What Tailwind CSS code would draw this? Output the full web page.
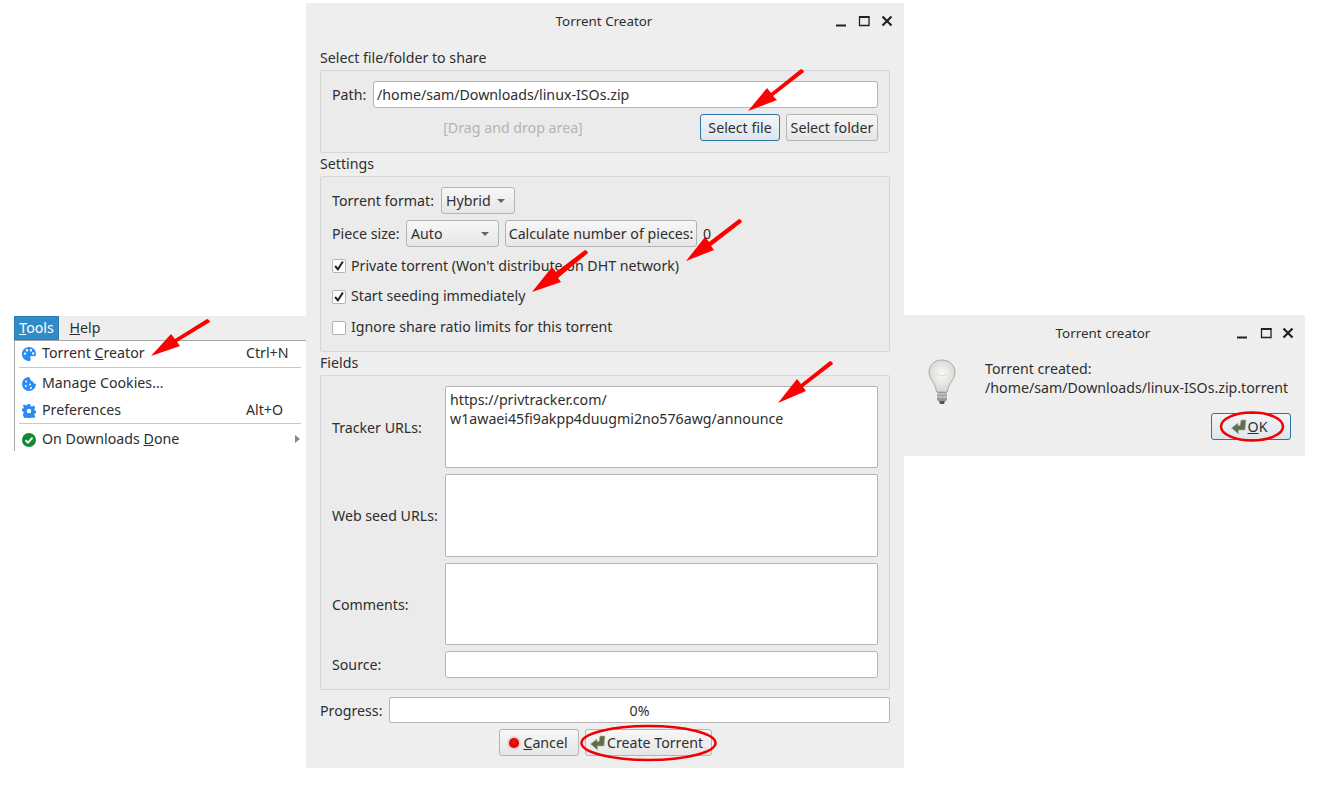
<!DOCTYPE html>
<html>
<head>
<meta charset="utf-8">
<script src="https://cdn.jsdelivr.net/npm/@tailwindcss/browser@4"></script>
<title>Torrent Creator</title>
</head>
<body class="bg-white">
<div class="relative w-[1324px] h-[800px] overflow-hidden bg-white font-['Noto_Sans',sans-serif] text-[14.2px] leading-[19px] text-[#2e2e2e]">

  <!-- Tools menu -->
  <div class="absolute left-[14px] top-[316px] w-[292px] h-[134px] flex flex-col">
    <div class="h-[24px] bg-[#eeeeee] flex shrink-0">
      <div class="w-[45px] bg-[#308cc6] text-white border border-[#2a7bb0] flex items-center justify-center"><span class="mb-[2px]"><u>T</u>ools</span></div>
      <div class="w-[52px] flex items-center justify-center"><span class="mb-[2px]"><u>H</u>elp</span></div>
    </div>
    <div class="flex-1 bg-white border-l border-t border-[#a9a9a9] flex flex-col">
      <div class="h-[26px] flex items-center pl-[7px] pr-[15px]">
        <svg class="w-[14px] h-[14px] shrink-0" viewBox="0 0 14 14"><path fill="#2a8cf0" fill-rule="evenodd" d="M7 0C3 0 0 3 0 7s3 7 7 7c1.2 0 1.8-.8 1.8-1.6 0-.9-.7-1.2-.7-2 0-.8.6-1.4 1.5-1.4H11.500C13 9.900 14 8.700 14 7 14 3 11 0 7 0zM3 7.800a1.200 1.200 0 1 1 0-2.400 1.200 1.200 0 0 1 0 2.400zM5 4.500a1.200 1.200 0 1 1 0-2.400 1.200 1.200 0 0 1 0 2.400zM9 4.500a1.200 1.200 0 1 1 0-2.400 1.200 1.200 0 0 1 0 2.400zM11.200 7.600a1.200 1.200 0 1 1 0-2.400 1.200 1.200 0 0 1 0 2.400z"/></svg>
        <span class="ml-[6px] flex-1 mb-[4px]">Torrent <u>C</u>reator</span><span class="w-[45px] mb-[4px]">Ctrl+N</span>
      </div>
      <div class="h-px bg-[#c8c8c8] ml-[4px] mr-[5px] mb-[1px]"></div>
      <div class="h-[28px] flex items-center pl-[7px] pr-[15px]">
        <svg class="w-[14px] h-[14px] shrink-0 mt-[2px]" viewBox="0 0 14 14"><path fill="#2a8cf0" fill-rule="evenodd" d="M7 0a7 7 0 1 0 7 7c-1.600 0-2.800-.9-3-2.400C9.400 4.500 8.200 3 8 1.500 7.900.8 7.500.4 7 0zM4.200 5.500a1 1 0 1 1 0-2 1 1 0 0 1 0 2zM3.800 10a1 1 0 1 1 0-2 1 1 0 0 1 0 2zM8 8.500a1 1 0 1 1 0-2 1 1 0 0 1 0 2zM9 12a1 1 0 1 1 0-2 1 1 0 0 1 0 2z"/></svg>
        <span class="ml-[6px] flex-1 mb-[2px]">Manage Cookies...</span>
      </div>
      <div class="h-[26px] flex items-center pl-[7px] pr-[15px]">
        <svg class="w-[14px] h-[14px] shrink-0 mt-[2px]" viewBox="0 0 14 14"><path fill="#2a8cf0" fill-rule="evenodd" d="M5.800 0h2.400l.4 2 1.300.6 1.800-1 1.600 1.800-1.100 1.700.5 1.300 2 .4v2.400l-2 .4-.5 1.300 1.100 1.700-1.600 1.800-1.800-1-1.300.6-.4 2H5.800l-.4-2-1.300-.6-1.800 1L.7 10.600l1.100-1.700-.5-1.300-2-.4V4.800l2-.4.5-1.300L.7 1.400 2.300.4l1.800 1 1.300-.6zM7 4.800a2.200 2.200 0 1 0 0 4.400 2.200 2.200 0 0 0 0-4.400z"/></svg>
        <span class="ml-[6px] flex-1 mb-[2px]">Preferences</span><span class="w-[45px] mb-[2px]">Alt+O</span>
      </div>
      <div class="h-px bg-[#c8c8c8] ml-[4px] mr-[5px] mb-[1px]"></div>
      <div class="h-[26px] flex items-center pl-[7px] pr-[6px]">
        <svg class="w-[14px] h-[14px] shrink-0 mt-[4px]" viewBox="0 0 14 14"><circle cx="7" cy="7" r="7" fill="#0f8a2c"/><path d="M3.500 7.200 6 9.600l4.500-5" fill="none" stroke="#fff" stroke-width="2"/></svg>
        <span class="ml-[6px] flex-1">On Downloads <u>D</u>one</span>
        <svg class="w-[5px] h-[8px] mt-[2px]" viewBox="0 0 5 8"><path d="M0 0l5 4-5 4z" fill="#888"/></svg>
      </div>
    </div>
  </div>

  <!-- Main window -->
  <div class="absolute left-[306px] top-[3px] w-[598px] h-[765px] bg-[#eeeeee] px-[14px] flex flex-col">
    <div class="relative h-[37px] shrink-0 flex items-center justify-center pr-[2px]">
      <span class="text-[13.4px]">Torrent Creator</span>
      <div class="absolute right-[-3px] top-[12px] flex items-center gap-[11px]">
        <svg class="w-[12px] h-[12px]" viewBox="0 0 12 12"><path d="M1 10.500h10" stroke="#222" stroke-width="2"/></svg>
        <svg class="w-[12px] h-[12px]" viewBox="0 0 12 12"><path d="M1.500 2h9.500v8.500H1.500z" fill="none" stroke="#222" stroke-width="1.300"/><path d="M1 2h10.500" stroke="#222" stroke-width="2"/></svg>
        <svg class="w-[12px] h-[12px]" viewBox="0 0 12 12"><path d="M1.500 1.500l9 9M10.500 1.500l-9 9" stroke="#222" stroke-width="2.200"/></svg>
      </div>
    </div>

    <div class="h-[30px] flex items-center shrink-0 pt-[4px]">Select file/folder to share</div>

    <div class="h-[83px] shrink-0 bg-[#ebebeb] border border-[#d6d6d6] rounded-[2px] pl-[11px] pr-[11px] pt-[10px] flex flex-col">
      <div class="flex items-center h-[27px] gap-[7px]">
        <span class="w-[34px] whitespace-nowrap">Path:</span>
        <div class="flex-1 h-[27px] bg-white border border-[#b4b4b4] rounded-[3px] flex items-center pl-[3px]">/home/sam/Downloads/linux-ISOs.zip</div>
      </div>
      <div class="flex items-center h-[27px] mt-[6px]">
        <span class="w-[362px] mr-[6px] text-center text-[#b4b4b4] shrink-0">[Drag and drop area]</span>
        <div class="w-[80px] h-[27px] border border-[#2a76a8] rounded-[3px] bg-gradient-to-b from-[#f2f5f8] to-[#dde5ec] flex items-center justify-center">Select file</div>
        <div class="w-[92px] h-[27px] ml-[6px] border border-[#b4b4b4] rounded-[3px] bg-gradient-to-b from-[#f7f7f7] to-[#e6e6e6] flex items-center justify-center whitespace-nowrap">Select folder</div>
      </div>
    </div>

    <div class="h-[23px] flex items-center shrink-0 pb-[2px]">Settings</div>

    <div class="h-[176px] shrink-0 bg-[#ebebeb] border border-[#d6d6d6] rounded-[2px] px-[11px] pt-[10px] flex flex-col">
      <div class="flex items-center h-[27px]">
        <span class="w-[103px] whitespace-nowrap">Torrent format:</span>
        <div class="ml-[6px] w-[74px] h-[27px] border border-[#b4b4b4] rounded-[3px] bg-gradient-to-b from-[#f7f7f7] to-[#e6e6e6] flex items-center justify-between pl-[4px] pr-[9px]"><span>Hybrid</span><svg class="w-[8px] h-[4px]" viewBox="0 0 8 4"><path d="M0 0h8L4 4z" fill="#666"/></svg></div>
      </div>
      <div class="flex items-center h-[27px] mt-[6px]">
        <span class="w-[68px] whitespace-nowrap">Piece size:</span>
        <div class="ml-[6px] w-[93px] h-[27px] border border-[#b4b4b4] rounded-[3px] bg-gradient-to-b from-[#f7f7f7] to-[#e6e6e6] flex items-center justify-between pl-[4px] pr-[9px]"><span>Auto</span><svg class="w-[8px] h-[4px]" viewBox="0 0 8 4"><path d="M0 0h8L4 4z" fill="#666"/></svg></div>
        <div class="ml-[6px] w-[192px] h-[27px] border border-[#b4b4b4] rounded-[3px] bg-gradient-to-b from-[#f7f7f7] to-[#e6e6e6] flex items-center justify-center whitespace-nowrap">Calculate number of pieces:</div>
        <span class="ml-[6px]">0</span>
      </div>
      <div class="flex items-center h-[31px] mt-[3px]">
        <span class="w-[14px] h-[14px] border border-[#b4b4b4] rounded-[2px] bg-white flex items-center justify-center"><svg class="w-[10px] h-[10px]" viewBox="0 0 9 9"><path d="M1 4.500l2.500 3L8 .5" fill="none" stroke="#222" stroke-width="1.800"/></svg></span>
        <span class="ml-[5px]">Private torrent (Won't distribute on DHT network)</span>
      </div>
      <div class="flex items-center h-[31px]">
        <span class="w-[14px] h-[14px] border border-[#b4b4b4] rounded-[2px] bg-white flex items-center justify-center"><svg class="w-[10px] h-[10px]" viewBox="0 0 9 9"><path d="M1 4.500l2.500 3L8 .5" fill="none" stroke="#222" stroke-width="1.800"/></svg></span>
        <span class="ml-[5px] mb-[2px]">Start seeding immediately</span>
      </div>
      <div class="flex items-center h-[31px]">
        <span class="w-[14px] h-[14px] border border-[#b4b4b4] rounded-[2px] bg-white"></span>
        <span class="ml-[5px] mb-[2px]">Ignore share ratio limits for this torrent</span>
      </div>
    </div>

    <div class="h-[23px] flex items-center shrink-0 pb-[2px]">Fields</div>

    <div class="h-[315px] shrink-0 bg-[#ebebeb] border border-[#d6d6d6] rounded-[2px] px-[11px] pt-[10px] flex flex-col">
      <div class="flex items-center h-[82px]">
        <span class="w-[113px] shrink-0">Tracker URLs:</span>
        <div class="flex-1 h-[82px] bg-white border border-[#b4b4b4] rounded-[2px] px-[4px] pt-[3px]">https://privtracker.com/<br>w1awaei45fi9akpp4duugmi2no576awg/announce</div>
      </div>
      <div class="flex items-center h-[83px] mt-[6px]">
        <span class="w-[113px] shrink-0 whitespace-nowrap">Web seed URLs:</span>
        <div class="flex-1 h-[83px] bg-white border border-[#b4b4b4] rounded-[2px]"></div>
      </div>
      <div class="flex items-center h-[82px] mt-[6px]">
        <span class="w-[113px] shrink-0">Comments:</span>
        <div class="flex-1 h-[82px] bg-white border border-[#b4b4b4] rounded-[2px]"></div>
      </div>
      <div class="flex items-center h-[27px] mt-[6px]">
        <span class="w-[113px] shrink-0">Source:</span>
        <div class="flex-1 h-[27px] bg-white border border-[#b4b4b4] rounded-[3px]"></div>
      </div>
    </div>

    <div class="flex items-center h-[26px] mt-[7px] shrink-0">
      <span class="w-[69px] shrink-0">Progress:</span>
      <div class="flex-1 h-[26px] bg-white border border-[#b4b4b4] rounded-[2px] flex items-center justify-center">0%</div>
    </div>

    <div class="flex justify-center h-[27px] mt-[6px] gap-[6px] shrink-0">
      <div class="w-[80px] h-[27px] border border-[#b4b4b4] rounded-[3px] bg-gradient-to-b from-[#f7f7f7] to-[#e6e6e6] flex items-center justify-center gap-[2px] pr-[2px]">
        <svg class="w-[14px] h-[14px]" viewBox="0 0 14 14"><defs><radialGradient id="r" cx=".45" cy=".4" r=".65"><stop offset="0" stop-color="#ff1010"/><stop offset="1" stop-color="#c80000"/></radialGradient></defs><circle cx="7" cy="7" r="6.800" fill="#e6cccc"/><circle cx="7" cy="7" r="5" fill="url(#r)"/></svg>
        <span><u>C</u>ancel</span>
      </div>
      <div class="w-[127px] h-[27px] border border-[#b4b4b4] rounded-[3px] bg-gradient-to-b from-[#f7f7f7] to-[#e6e6e6] flex items-center justify-center gap-[1px] pr-[3px]">
        <svg class="w-[16px] h-[16px]" viewBox="0 0 16 16"><path d="M.5 9 7 4v2.500h2L10 1h5l-1 10H7.500v4z" fill="#5e6f4a" stroke="#b0bba0" stroke-width=".6"/></svg>
        <span>Create Torrent</span>
      </div>
    </div>
  </div>

  <!-- Message dialog -->
  <div class="absolute left-[904px] top-[315px] w-[401px] h-[141px] bg-[#eeeeee] flex flex-col">
    <div class="relative h-[37px] flex items-center justify-center shrink-0 pr-[3px]">
      <span class="text-[13.4px]">Torrent creator</span>
      <div class="absolute left-[332px] top-[12px] flex items-center">
        <svg class="w-[12px] h-[12px]" viewBox="0 0 12 12"><path d="M1 10.500h10" stroke="#222" stroke-width="2"/></svg>
        <svg class="w-[12px] h-[12px] ml-[12px]" viewBox="0 0 12 12"><path d="M1.500 2h9.500v8.500H1.500z" fill="none" stroke="#222" stroke-width="1.300"/><path d="M1 2h10.500" stroke="#222" stroke-width="2"/></svg>
        <svg class="w-[12px] h-[12px] ml-[10px]" viewBox="0 0 12 12"><path d="M1.500 1.500l9 9M10.500 1.500l-9 9" stroke="#222" stroke-width="2.200"/></svg>
      </div>
    </div>
    <div class="flex pl-[24px]">
      <svg class="w-[28px] h-[46px] mt-[7px] shrink-0" viewBox="0 0 28 46">
        <defs><radialGradient id="b" cx=".5" cy=".45" r=".6"><stop offset="0" stop-color="#fafafa"/><stop offset="1" stop-color="#cfd3cf"/></radialGradient></defs>
        <path d="M14 1C7 1 1 6 1 13c0 8 7 11 7.500 20h11C20 24 27 21 27 13 27 6 21 1 14 1z" fill="url(#b)" stroke="#a8aca8"/>
        <path d="M9 15c3 2 7 2 10 0" fill="none" stroke="#e8e0a0" stroke-width="1.500"/>
        <rect x="9" y="33" width="10" height="9" rx="1.500" fill="#9a9a9a"/>
        <path d="M9 35h10M9 38h10" stroke="#e0e0e0"/>
        <path d="M11 42h6l-1 3h-4z" fill="#555"/>
      </svg>
      <div class="ml-[29px] mt-[7px] whitespace-nowrap">Torrent created:<br>/home/sam/Downloads/linux-ISOs.zip.torrent</div>
    </div>
    <div class="flex justify-end pr-[14px] mt-[8px]">
      <div class="w-[80px] h-[27px] border border-[#2a76a8] rounded-[3px] bg-gradient-to-b from-[#f2f5f8] to-[#dde5ec] flex items-center justify-center gap-[1px] pr-[4px]">
        <svg class="w-[16px] h-[16px]" viewBox="0 0 16 16"><path d="M.5 9 7 4v2.500h2L10 1h5l-1 10H7.500v4z" fill="#5e6f4a" stroke="#b0bba0" stroke-width=".6"/></svg>
        <span><u>O</u>K</span>
      </div>
    </div>
  </div>

  <!-- Annotations -->
  <svg class="absolute left-0 top-0 w-[1324px] h-[800px] pointer-events-none" viewBox="0 0 1324 800">
    <g fill="#ff0000">
      <path d="M803 70 804 72 773 96 777 100 748 111 767 88 771 93 801 69z"/>
      <path d="M741 220 742 222 711 246 714 250 686 261 705 237 709 242 739 219z"/>
      <path d="M587 251 588 253 558 278 561 282 532 292 552 267 556 272 585 250z"/>
      <path d="M209 320 210 322 177 342 180 346 151 356 171 334 175 339 207 319z"/>
      <path d="M832 362 833 364 803 387 806 391 778 403 797 379 801 384 830 361z"/>
    </g>
    <ellipse cx="1252" cy="426.500" rx="31" ry="14" fill="none" stroke="#f00000" stroke-width="2.500"/>
    <ellipse cx="648.500" cy="743" rx="67" ry="17" fill="none" stroke="#f00000" stroke-width="2.500"/>
  </svg>
</div>
</body>
</html>
